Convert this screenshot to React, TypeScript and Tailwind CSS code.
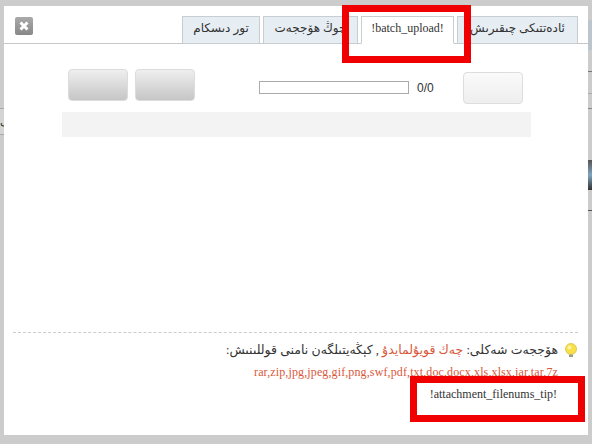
import React from 'react';

const serif = "font-['Liberation_Serif','DejaVu_Sans',serif]";

const Tab = ({ label, width, active }: { label: string; width: string; active?: boolean }) => (
    <div
        className={`h-[28px] pt-[1px] border border-[#c8cdd2] text-[12px] leading-[20px] text-[#333] text-center whitespace-nowrap overflow-hidden -mb-px ${width} ${serif} ${
            active ? 'bg-white border-b-white' : 'bg-[#e6edf3]'
        }`}
    >
        {label}
    </div>
);

const GrayButton = () => (
    <div className="w-[60px] h-[32px] rounded-[4px] border border-[#dcdcdc] bg-gradient-to-b from-[#efefef] to-[#c6c6c6]" />
);

const App = () => {
    return (
        <div className="relative w-[592px] h-[444px] overflow-hidden bg-[#cccccc] pl-[4px] pr-[4px] pt-[6px] pb-[9px]">
            {/* page behind the dialog, only the edges show */}
            <div className="absolute left-0 top-[108px] w-[4px] h-[27px] border-y border-[#aaa] bg-[#d4d4d4] text-[11px] leading-[25px] overflow-hidden text-[#333]">
                ک
            </div>
            <div className="absolute right-0 top-[20px] w-[4px] h-[30px] bg-[#bcc4cc]" />
            <div className="absolute right-0 top-[71px] w-[4px] h-px bg-[#777]" />
            <div className="absolute right-0 top-[93px] w-[4px] h-px bg-[#aaa]" />
            <div className="absolute right-0 top-[108px] w-[4px] h-px bg-[#888]" />
            <div className="absolute right-0 top-[160px] w-[4px] h-[30px] bg-gradient-to-b from-[#555] via-[#7ea6c0] to-[#333]" />
            <div className="absolute right-0 top-[210px] w-[4px] h-px bg-[#555]" />

            <div className="relative h-full bg-white flex flex-col">
                <div className="h-[38px] border-b border-[#c8c8c8] flex items-end pl-[11px] pr-[10px]">
                    <div className="w-[18px] h-[18px] mb-[8px] rounded-[2px] bg-gradient-to-b from-[#aaa] to-[#888] flex items-center justify-center">
                        <svg width="12" height="12" viewBox="0 0 12 12">
                            <path d="M2.5 2.5 L9.5 9.5 M9.5 2.5 L2.5 9.5" stroke="#fff" strokeWidth="3" />
                        </svg>
                    </div>
                    <div dir="rtl" className="ml-auto flex gap-[3px]">
                        <Tab label="ئادەتتىكى چىقىرىش" width="w-[121px]" />
                        <Tab label="!batch_upload!" width="w-[93px]" active />
                        <Tab label="چوڭ هۆججەت" width="w-[95px]" />
                        <Tab label="تور دىسكام" width="w-[78px]" />
                    </div>
                </div>

                <div className="flex items-start pl-[64px] pt-[25px]">
                    <div className="flex gap-[7px]">
                        <GrayButton />
                        <GrayButton />
                    </div>
                    <div className="ml-[64px] mt-[12px] w-[150px] h-[13px] border border-[#aaa] bg-white" />
                    <div className="ml-[8px] mt-[11px] text-[12px] leading-[16px] text-[#333] font-['Liberation_Sans',sans-serif]">0/0</div>
                    <div className="ml-[29px] mt-[3px] w-[60px] h-[32px] rounded-[4px] border border-[#dddddd] bg-gradient-to-b from-[#fafafa] to-[#eeeeee]" />
                </div>

                <div className="ml-[58px] mr-[57px] mt-[8px] h-[25px] bg-[#f3f3f3]" />

                <div className="mt-auto ml-[9px] mr-[10px] border-t border-dashed border-[#cccccc] pt-[9px] pb-[34px]">
                    <div dir="rtl" className={`flex items-center gap-[6px] h-[16px] text-[12.5px] leading-[16px] text-[#333] ${serif}`}>
                        <svg width="14" height="15" viewBox="0 0 14 15" className="shrink-0">
                            <circle cx="7" cy="6" r="5.5" fill="#f8e04a" stroke="#d8c23e" strokeWidth="0.8" />
                            <circle cx="5.5" cy="4.5" r="2" fill="#fdf3a0" />
                            <rect x="5" y="11.5" width="4" height="2.5" fill="#9aa08a" />
                        </svg>
                        <span>
                            هۆججەت شەكلى: <span className="text-[#d9583b]">چەك قويۇلمايدۇ</span> , كېڭەيتىلگەن نامنى قوللىنىش:
                        </span>
                    </div>
                    <div className={`mt-[7px] pr-[20px] text-right text-[12px] tracking-[0.12px] leading-[14px] text-[#d9583b] ${serif}`}>
                        rar,zip,jpg,jpeg,gif,png,swf,pdf,txt,doc,docx,xls,xlsx,jar,tar,7z
                    </div>
                    <div className={`mt-[8px] pr-[21px] text-right text-[12px] leading-[14px] text-[#333] ${serif}`}>
                        !attachment_filenums_tip!
                    </div>
                </div>
            </div>

            {/* red annotation boxes drawn over the screenshot */}
            <div className="absolute left-[342px] top-[5px] w-[129px] h-[58px] border-[7px] border-[#f00000]" />
            <div className="absolute left-[410px] top-[376px] w-[175px] h-[46px] border-[7px] border-[#f00000]" />
        </div>
    );
};

export default App;
